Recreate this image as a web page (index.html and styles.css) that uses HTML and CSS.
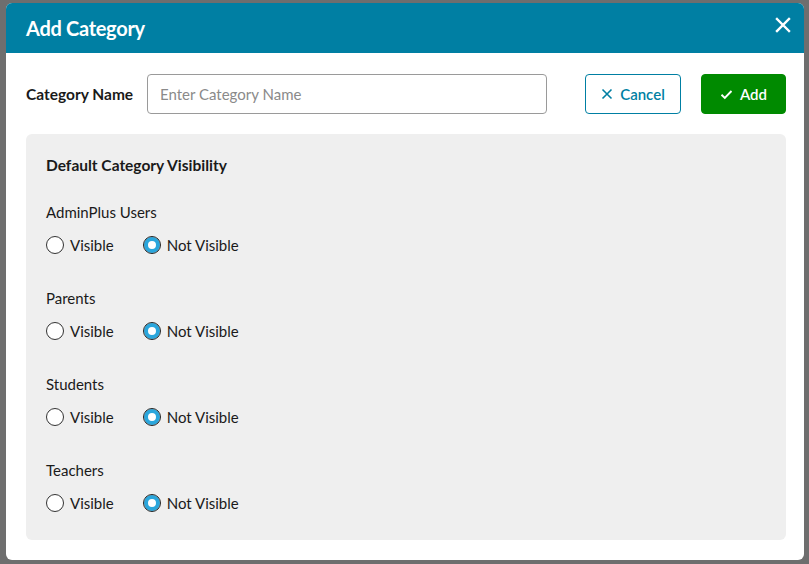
FILE: index.html
```html
<!DOCTYPE html>
<html>
<head>
<meta charset="utf-8">
<link rel="stylesheet" href="styles.css">
</head>
<body>
<div class="dialog">
  <div class="header">
    <h1 class="title">Add Category</h1>
    <button class="close" aria-label="Close">
      <svg width="16" height="16" viewBox="0 0 16 16"><path d="M2 2L14 14M14 2L2 14" stroke="#fff" stroke-width="2.4" stroke-linecap="square"/></svg>
    </button>
  </div>
  <div class="body">
    <div class="name-row">
      <label class="name-label">Category Name</label>
      <input class="name-input" type="text" placeholder="Enter Category Name">
      <button class="btn btn-cancel">
        <svg width="12" height="12" viewBox="0 0 12 12"><path d="M1.5 1.5L10.5 10.5M10.5 1.5L1.5 10.5" stroke="#007fa3" stroke-width="1.6"/></svg>
        <span>Cancel</span>
      </button>
      <button class="btn btn-add">
        <svg width="13" height="11" viewBox="0 0 13 11"><path d="M1.5 5.8L4.8 9L11.5 2" fill="none" stroke="#fff" stroke-width="1.9"/></svg>
        <span>Add</span>
      </button>
    </div>
    <div class="panel">
      <div class="panel-title">Default Category Visibility</div>
      <div class="group">
        <div class="group-label">AdminPlus Users</div>
        <div class="radios">
          <span class="radio"><span class="dot"></span>Visible</span>
          <span class="radio on"><span class="dot"></span>Not Visible</span>
        </div>
      </div>
      <div class="group">
        <div class="group-label">Parents</div>
        <div class="radios">
          <span class="radio"><span class="dot"></span>Visible</span>
          <span class="radio on"><span class="dot"></span>Not Visible</span>
        </div>
      </div>
      <div class="group">
        <div class="group-label">Students</div>
        <div class="radios">
          <span class="radio"><span class="dot"></span>Visible</span>
          <span class="radio on"><span class="dot"></span>Not Visible</span>
        </div>
      </div>
      <div class="group">
        <div class="group-label">Teachers</div>
        <div class="radios">
          <span class="radio"><span class="dot"></span>Visible</span>
          <span class="radio on"><span class="dot"></span>Not Visible</span>
        </div>
      </div>
    </div>
  </div>
</div>
</body>
</html>
```
FILE: styles.css
```css
html, body {
  margin: 0;
  padding: 0;
}
body {
  background: #6e6e6e;
  font-family: "Lato", "Liberation Sans", sans-serif;
  color: #1a1a1a;
  width: 809px;
  height: 564px;
  overflow: hidden;
  padding: 3px 5px 4px 6px;
  box-sizing: border-box;
}
.dialog {
  background: #fff;
  border-radius: 6px;
  overflow: hidden;
  height: 557px;
  display: flex;
  flex-direction: column;
}
.header {
  background: #007fa3;
  height: 50px;
  display: flex;
  align-items: center;
  justify-content: space-between;
  padding: 0 13px 0 20px;
  flex: none;
}
.title {
  margin: 0;
  color: #fff;
  font-size: 20px;
  font-weight: 700;
  letter-spacing: -0.3px;
}
.close {
  background: none;
  border: none;
  padding: 0;
  width: 16px;
  height: 16px;
  display: flex;
  margin-top: -6px;
}
.body {
  padding: 21px 18px 20px 20px;
  display: flex;
  flex-direction: column;
  flex: 1;
  min-height: 0;
}
.name-row {
  display: flex;
  align-items: center;
  height: 40px;
  flex: none;
}
.name-label {
  font-size: 15.5px;
  font-weight: 700;
  width: 121px;
  flex: none;
}
.name-input {
  width: 400px;
  height: 40px;
  box-sizing: border-box;
  border: 1px solid #9a9a9a;
  border-radius: 4px;
  padding: 0 12px;
  font-family: inherit;
  font-size: 15px;
  margin-right: 38px;
}
.name-input::placeholder {
  color: #8a8a8a;
}
.btn {
  height: 40px;
  box-sizing: border-box;
  border-radius: 4px;
  font-family: inherit;
  font-size: 15px;
  font-weight: 600;
  display: flex;
  align-items: center;
  justify-content: center;
  gap: 7px;
  padding: 0;
}
.btn-cancel {
  width: 96px;
  background: #fff;
  border: 1px solid #007fa3;
  color: #007fa3;
  margin-right: 20px;
}
.btn-add {
  width: 85px;
  background: #008a00;
  border: 1px solid #008a00;
  color: #fff;
}
.panel {
  margin-top: 20px;
  background: #efefef;
  border-radius: 6px;
  flex: 1;
  min-height: 0;
  padding: 20px 20px;
}
.panel-title {
  font-size: 15.5px;
  font-weight: 700;
  line-height: 22px;
  margin-bottom: 26px;
}
.group {
  margin-bottom: 33px;
}
.group:last-child {
  margin-bottom: 0;
}
.group-label {
  font-size: 15px;
  line-height: 20px;
  margin-bottom: 13px;
}
.radios {
  display: flex;
  gap: 29px;
  font-size: 15px;
  line-height: 20px;
}
.radio {
  display: flex;
  align-items: center;
  gap: 6px;
}
.dot {
  width: 18px;
  height: 18px;
  box-sizing: border-box;
  border: 1.5px solid #333;
  border-radius: 50%;
  background: #fff;
  display: inline-block;
}
.radio.on .dot {
  border: 1.5px solid #222;
  background: #fff;
  box-shadow: inset 0 0 0 4px #2aa6dc;
}
```
